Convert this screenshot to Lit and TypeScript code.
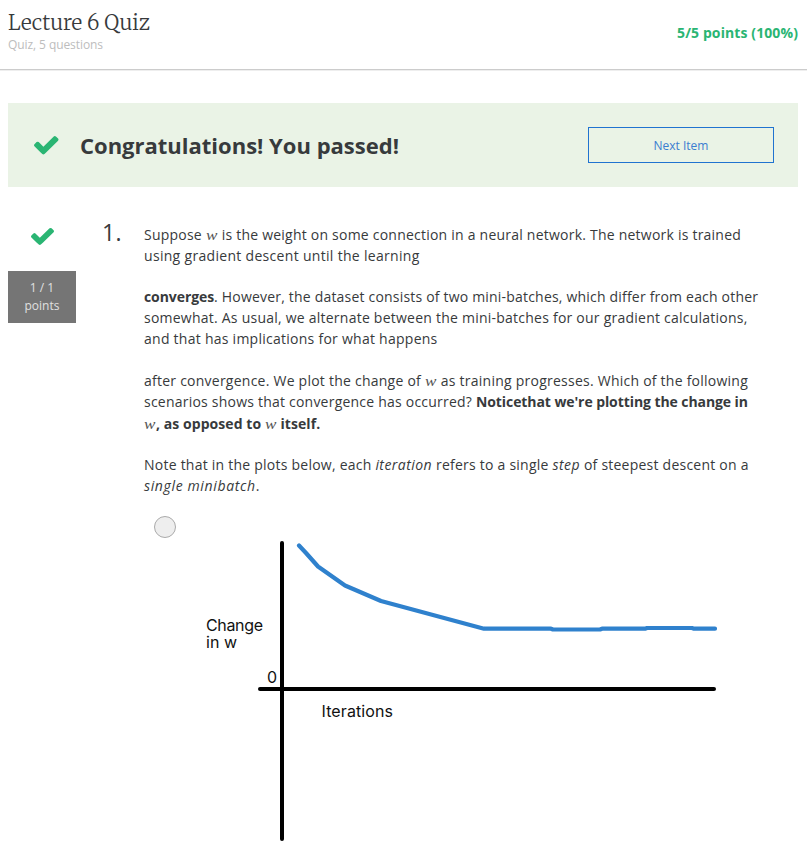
import { LitElement, html, css, svg, TemplateResult } from "lit";
import { customElement, property } from "lit/decorators.js";

@customElement("check-mark")
class CheckMark extends LitElement {
  static styles = css`
    :host { display: block; width: 24.5px; height: 19.5px; }
    svg { display: block; width: 100%; height: 100%; fill: #2ab573; }
  `;
  render() {
    return html`<svg viewBox="121 270 1550 1252" preserveAspectRatio="none">
      <path d="M1671 566q0 40-28 68l-724 724-136 136q-28 28-68 28t-68-28l-136-136-362-362q-28-28-28-68t28-68l136-136q28-28 68-28t68 28l294 295 656-657q28-28 68-28t68 28l136 136q28 28 28 68z"/>
    </svg>`;
  }
}

@customElement("convergence-plot")
class ConvergencePlot extends LitElement {
  @property() points = "";
  static styles = css`
    :host { display: block; width: 540px; height: 320px; }
    svg { display: block; }
    .axis { stroke: #000; stroke-width: 4; stroke-linecap: round; }
    .curve { fill: none; stroke: #2f81cd; stroke-width: 4.2; stroke-linecap: round; stroke-linejoin: round; }
    text { font: 16px Inter, sans-serif; fill: #111; }
  `;
  render() {
    return html`<svg width="540" height="320" viewBox="190 530 540 320">
      ${svg`
        <line class="axis" x1="282" y1="543" x2="282" y2="839"/>
        <line class="axis" x1="260" y1="689" x2="714" y2="689"/>
        <polyline class="curve" points=${this.points}/>
        <text x="206" y="631" textLength="57">Change</text>
        <text x="206" y="647.5" textLength="31">in w</text>
        <text x="267" y="683" textLength="10">0</text>
        <text x="321.5" y="717" textLength="71.5">Iterations</text>
      `}
    </svg>`;
  }
}

@customElement("app-root")
class AppRoot extends LitElement {
  static styles = css`
    :host { display: block; height: 857px; overflow: hidden; background: #fff; color: #373a3c; font-family: "Open Sans", sans-serif; font-size: 14px; line-height: 21px; }
    * { box-sizing: border-box; }
    header { display: flex; justify-content: space-between; height: 71px; padding: 9px 9px 0 8px; border-bottom: 1px solid #eee; box-shadow: inset 0 -1px #ccc; }
    h1 { margin: 0; font: 300 20.75px/28px Merriweather, "Noto Serif", "Liberation Serif", serif; }
    .sub { font-size: 12px; line-height: 15px; letter-spacing: -0.08px; color: #bdbdbd; }
    .score { margin-top: 13px; font-weight: 700; letter-spacing: 0.1px; color: #2ab573; }
    .banner { display: flex; align-items: center; height: 84px; margin: 32px 9px 0 8px; padding: 0 24px 0 26px; background: #eaf3e6; }
    h2 { flex: 1; margin: 0 0 0 21.5px; font-size: 22px; line-height: 30px; }
    button { width: 186px; height: 36px; padding: 0; border: 1px solid #2073d0; background: transparent; color: #3b7dd0; font: 12px "Open Sans", sans-serif; }
    .question { display: grid; grid-template-columns: 68px 26px 42px 640px; padding: 37px 0 0 8px; }
    .mark { width: 23px; height: 18px; margin: 3px 0 0 22.5px; }
    .points { height: 52px; margin-top: 26px; padding-top: 8px; background: #757575; color: #e0e0e0; font-size: 12px; line-height: 18px; text-align: center; }
    .number { grid-column: 3; font-size: 23px; line-height: 16px; letter-spacing: 0.4px; }
    .body { grid-column: 4; }
    p { margin: 0 0 20.3px; white-space: nowrap; }
    p > span { display: block; }
    p > .tall { padding-top: 1px; }
    b { letter-spacing: -0.08px; }
    .tall b { letter-spacing: 0.06px; }
    em { letter-spacing: 0.45px; }
    .wide { letter-spacing: 0.64px; }
    .math { display: inline-block; width: 12px; font: italic 15px/15px "Liberation Serif", serif; letter-spacing: 0; color: #555; transform: scaleX(1.14); transform-origin: 0 50%; }
    .radio { width: 22px; height: 22px; margin: 0 0 0 10px; border: 1px solid #aaa; border-radius: 50%; background: #eee; }
    .option { display: flex; margin-top: 19px; }
    convergence-plot { margin: 14px 0 0 14px; }
  `;
  line(spacing: number, text: TemplateResult | string) {
    return html`<span style="letter-spacing:${spacing}px">${text}</span>`;
  }
  render() {
    const w = html`<i class="math">w</i>`;
    return html`
      <header>
        <div><h1>Lecture 6 Quiz</h1><div class="sub">Quiz, 5 questions</div></div>
        <div class="score">5/5 points (100%)</div>
      </header>
      <section class="banner">
        <check-mark></check-mark>
        <h2>Congratulations! You passed!</h2>
        <button>Next Item</button>
      </section>
      <main class="question">
        <aside>
          <check-mark class="mark"></check-mark>
          <div class="points">1 / 1<br>points</div>
        </aside>
        <div class="number">1.</div>
        <div class="body">
          <p>${this.line(0.225, html`Suppose ${w} is the weight on some connection in a neural network. The network is trained`)}${this.line(0.31, "using gradient descent until the learning")}</p>
          <p>${this.line(0.195, html`<b>converges</b>. However, the dataset consists of two mini-batches, which differ from each other`)}${this.line(0.235, "somewhat. As usual, we alternate between the mini-batches for our gradient calculations,")}${this.line(0.26, "and that has implications for what happens")}</p>
          <p>${this.line(0.24, html`after convergence. We plot the change of ${w} as training progresses. Which of the following`)}${this.line(0.22, html`scenarios shows that convergence has occurred? <b>Noticethat we're plotting the change in</b>`)}<span class="tall">${w}<b>, as opposed to </b>${w}<b> itself.</b></span></p>
          <p>${this.line(0.235, html`Note that in the plots below, each <em>iteration</em> refers to a single <em>step</em> of steepest descent on a`)}<span><em class="wide">single minibatch</em>.</span></p>
          <div class="option">
            <div class="radio"></div>
            <convergence-plot points="299,545.5 306,553 318,566.5 345,585.5 381,601 484,628.7 551,628.7 553,629.5 600,629.5 602,628.7 645,628.7 647,628 692,628 694,628.7 715,628.7"></convergence-plot>
          </div>
        </div>
      </main>`;
  }
}
